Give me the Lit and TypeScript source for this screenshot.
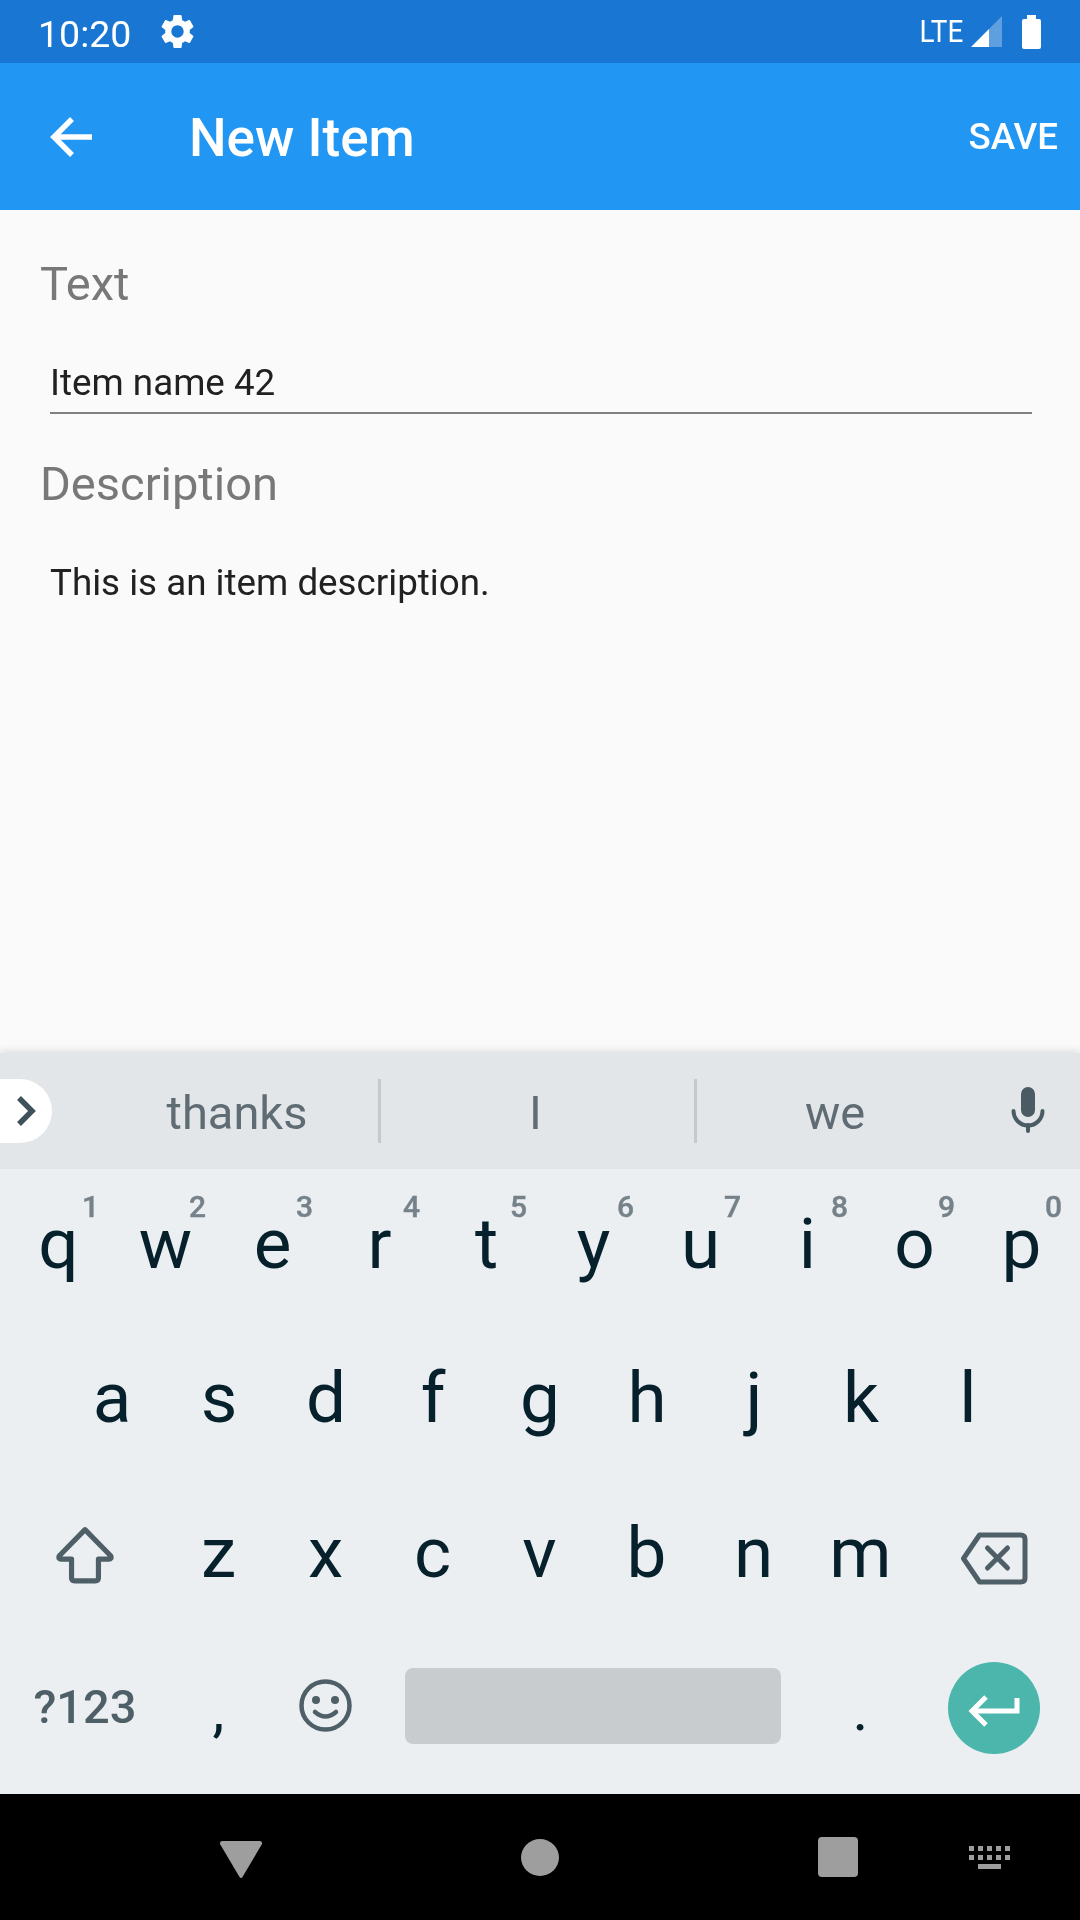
import { LitElement, html, css } from "lit";
import { customElement } from "lit/decorators.js";

const row1 = ["q", "w", "e", "r", "t", "y", "u", "i", "o", "p"];
const hints = ["1", "2", "3", "4", "5", "6", "7", "8", "9", "0"];
const row2 = ["a", "s", "d", "f", "g", "h", "j", "k", "l"];
const row3 = ["z", "x", "c", "v", "b", "n", "m"];

@customElement("app-root")
export class AppRoot extends LitElement {
  static styles = css`
    :host { display: block; width: 1080px; height: 1920px; font-family: Roboto, "Liberation Sans", sans-serif; }
    .page { display: flex; flex-direction: column; height: 1920px; background: #fafafa; overflow: hidden; }
    svg { display: block; flex: none; }
    .time, .lte, .title, .save, .form, .rows, .cell { will-change: opacity; }

    .status { flex: none; height: 63px; background: #1976d2; color: #fff; display: flex; align-items: center; padding: 0 39px 0 38px; box-sizing: border-box; }
    .time { font-size: 37.5px; line-height: 44px; padding-top: 4px; }
    .gear { margin-left: 26px; }
    .lte { margin-left: auto; font-size: 32px; font-weight: 400; line-height: 40px; transform: scaleX(0.87); transform-origin: right center; padding-bottom: 2px; }
    .signal { margin-left: 8px; }
    .battery { margin-left: 20px; }

    .toolbar { flex: none; height: 147px; background: #2196f3; color: #fff; display: flex; align-items: center; padding: 0 22px 0 50px; box-sizing: border-box; }
    .title { font-size: 53px; font-weight: 500; line-height: 62px; margin-left: 97px; padding-top: 3px; }
    .save { margin-left: auto; font-size: 36.75px; font-weight: 500; line-height: 44px; padding-top: 1px; }

    .form { flex: 1; padding-top: 47px; }
    .label { font-size: 47px; line-height: 54px; color: #787878; margin-left: 40px; }
    .value { font-size: 36.75px; line-height: 44px; color: #212121; margin-left: 50px; }
    .name { margin: 49.5px 48px 0 50px; padding-bottom: 7px; border-bottom: 2px solid #808080; }
    .desc-label { margin-top: 43px; }
    .desc { margin-top: 50.5px; }

    .keyboard { flex: none; height: 741px; background: #ebeff2; box-shadow: 0 -2px 8px rgba(0, 0, 0, 0.12); position: relative; }
    .strip { height: 116px; background: #e3e6e9; display: flex; align-items: center; }
    .pill { flex: none; width: 52px; height: 64px; background: #fff; border-radius: 0 32px 32px 0; margin-top: -1px; }
    .cell { flex: none; box-sizing: border-box; text-align: center; font-size: 47px; line-height: 56px; color: #5f6c74; padding-top: 4px; }
    .c1 { width: 326px; padding-left: 44px; }
    .c2 { width: 313px; padding-right: 4px; }
    .c3 { width: 276px; }
    .sep { flex: none; width: 3px; height: 64px; background: #c5c9cc; margin-top: -1px; }
    .mic { margin-left: 38px; margin-top: -2px; }

    .rows { padding: 0 5px; }
    .row { display: flex; height: 154.5px; }
    .indent { padding-left: 53.5px; }
    .key { position: relative; flex: none; width: 107px; display: flex; align-items: center; justify-content: center; box-sizing: border-box; font-size: 71px; color: #06202c; padding-bottom: 6px; }
    .hint { position: absolute; top: 23px; right: 13px; font-size: 30px; line-height: 29px; font-weight: 500; color: #76828a; -webkit-text-stroke: 0.4px #76828a; }
    .wide { width: 160px; }
    .spacekey { width: 428px; padding-bottom: 0; }
    .space { width: 376px; height: 76px; background: #c8cccf; border-radius: 8px; margin-top: -8px; }
    .sym { font-size: 47px; font-weight: 500; color: #4f5f67; padding-bottom: 7px; }
    .punct { font-size: 60px; padding-bottom: 0; }
    .emoji { margin-top: -8px; }
    .del { margin: 6px 0 0 -1px; }
    .enter { width: 92px; height: 92px; border-radius: 50%; background: #4db6ac; margin-top: -4px; }
    .keyslot { padding-bottom: 0; }

    .nav { flex: none; height: 126px; background: #000; display: flex; align-items: center; }
    .back { margin: 5px 0 0 219px; }
    .home { width: 38px; height: 37px; border-radius: 50%; background: #9e9e9e; margin-left: 258px; }
    .recent { width: 40px; height: 40px; border-radius: 4px; background: #9e9e9e; margin-left: 259px; }
    .kbd { margin-left: 111px; }
  `;

  private key(label: string, hint?: string) {
    return html`<div class="key">${label}${hint ? html`<span class="hint">${hint}</span>` : ""}</div>`;
  }

  render() {
    return html`
      <div class="page">
        <div class="status">
          <span class="time">10:20</span>
          <svg class="gear" width="41" height="41" viewBox="0 0 24 24" fill="#fff"><path fill-rule="evenodd" d="M19.14,12.94c0.04-0.3,0.06-0.61,0.06-0.94c0-0.32-0.02-0.64-0.07-0.94l2.03-1.58c0.18-0.14,0.23-0.41,0.12-0.61l-1.92-3.32c-0.12-0.22-0.37-0.29-0.59-0.22l-2.39,0.96c-0.5-0.38-1.03-0.7-1.62-0.94L14.4,2.81c-0.04-0.24-0.24-0.41-0.48-0.41h-3.84c-0.24,0-0.43,0.17-0.47,0.41L9.25,5.35C8.66,5.59,8.12,5.92,7.63,6.29L5.24,5.33c-0.22-0.08-0.47,0-0.59,0.22L2.74,8.87C2.62,9.08,2.66,9.34,2.86,9.48l2.03,1.58C4.84,11.36,4.8,11.69,4.8,12s0.02,0.64,0.07,0.94l-2.03,1.58c-0.18,0.14-0.23,0.41-0.12,0.61l1.92,3.32c0.12,0.22,0.37,0.29,0.59,0.22l2.39-0.96c0.5,0.38,1.03,0.7,1.62,0.94l0.36,2.54c0.05,0.24,0.24,0.41,0.48,0.41h3.84c0.24,0,0.44-0.17,0.47-0.41l0.36-2.54c0.59-0.24,1.13-0.56,1.62-0.94l2.39,0.96c0.22,0.08,0.47,0,0.59-0.22l1.92-3.32c0.12-0.22,0.07-0.47-0.12-0.61L19.14,12.94z M12,15.6c-1.98,0-3.6-1.62-3.6-3.6s1.62-3.6,3.6-3.6s3.6,1.62,3.6,3.6S13.98,15.6,12,15.6z"/></svg>
          <span class="lte">LTE</span>
          <svg class="signal" width="31" height="31" viewBox="0 0 31 31"><path d="M18 13 L31 0 V31 H18 Z" fill="#fff" opacity="0.3"/><path d="M0 31 L18 13 V31 Z" fill="#fff"/></svg>
          <svg class="battery" width="19" height="34" viewBox="0 0 19 34"><path d="M5 0 H14 V4 H17 Q19 4 19 6 V32 Q19 34 17 34 H2 Q0 34 0 32 V6 Q0 4 2 4 H5 Z" fill="#fff"/></svg>
        </div>

        <div class="toolbar">
          <svg width="42" height="42" viewBox="0 0 42 42" fill="none" stroke="#fff" stroke-width="5.5"><path d="M42 21 H5"/><path d="M22 3 L4 21 L22 39"/></svg>
          <span class="title">New Item</span>
          <span class="save">SAVE</span>
        </div>

        <div class="form">
          <div class="label">Text</div>
          <div class="value name">Item name 42</div>
          <div class="label desc-label">Description</div>
          <div class="value desc">This is an item description.</div>
        </div>

        <div class="keyboard">
          <div class="strip">
            <div class="pill">
              <svg width="52" height="64" viewBox="0 0 52 64" fill="none" stroke="#3f525c" stroke-width="5.5"><path d="M19 19 L32 32 L19 45"/></svg>
            </div>
            <div class="cell c1">thanks</div>
            <div class="sep"></div>
            <div class="cell c2">I</div>
            <div class="sep"></div>
            <div class="cell c3">we</div>
            <svg class="mic" width="34" height="46" viewBox="0 0 34 46" fill="none" stroke="#4a5b64" stroke-width="4" stroke-linecap="round"><rect x="10" y="0" width="14" height="30" rx="7" fill="#4a5b64" stroke="none"/><path d="M2.5 24 A14.5 14.5 0 0 0 31.5 24"/><path d="M17 38 V44"/></svg>
          </div>

          <div class="rows">
            <div class="row">${row1.map((k, i) => this.key(k, hints[i]))}</div>
            <div class="row indent">${row2.map((k) => this.key(k))}</div>
            <div class="row">
              <div class="key wide keyslot">
                <svg width="60" height="58" viewBox="0 0 58 56" fill="none" stroke="#4f5f67" stroke-width="5" stroke-linejoin="round"><path d="M29 3.5 L4 29 Q3 32 6 32 H16 V50 Q16 53 19 53 H39 Q42 53 42 50 V32 H52 Q55 32 54 29 Z"/></svg>
              </div>
              ${row3.map((k) => this.key(k))}
              <div class="key wide keyslot">
                <svg class="del" width="68" height="53" viewBox="0 0 67 53" fill="none" stroke="#4f5f67" stroke-width="5" stroke-linejoin="round" stroke-linecap="round"><path d="M3 26.5 L19 3 H60 Q64.5 3 64.5 7 V46 Q64.5 50 60 50 H19 Z"/><path d="M27 16 L47 36 M47 16 L27 36"/></svg>
              </div>
            </div>
            <div class="row">
              <div class="key wide sym">?123</div>
              <div class="key punct">,</div>
              <div class="key keyslot">
                <svg class="emoji" width="53" height="53" viewBox="0 0 53 53" fill="none" stroke="#4f5f67" stroke-width="4.5" stroke-linecap="round"><circle cx="26.5" cy="26.5" r="24"/><circle cx="17" cy="21" r="4" fill="#4f5f67" stroke="none"/><circle cx="36" cy="21" r="4" fill="#4f5f67" stroke="none"/><path d="M16 33 Q26.5 42 37 33"/></svg>
              </div>
              <div class="key spacekey"><div class="space"></div></div>
              <div class="key punct">.</div>
              <div class="key wide keyslot">
                <div class="enter">
                  <svg width="92" height="92" viewBox="0 0 92 92" fill="none" stroke="#fff" stroke-width="5"><path d="M69 36 V49 H25"/><path d="M38 35 L24 49 L38 63"/></svg>
                </div>
              </div>
            </div>
          </div>
        </div>

        <div class="nav">
          <svg class="back" width="44" height="37" viewBox="0 0 43 37" fill="#9e9e9e"><path d="M3 0 H40 Q43 0 42.5 3 L23 36 Q21.5 38 20 36 L0.5 3 Q0 0 3 0 Z"/></svg>
          <div class="home"></div>
          <div class="recent"></div>
          <svg class="kbd" width="41" height="23" viewBox="0 0 41 23" fill="#9e9e9e">
            <path d="M0 0h5v5h-5z M9 0h5v5h-5z M18 0h5v5h-5z M27 0h5v5h-5z M36 0h5v5h-5z M0 9h5v5h-5z M9 9h5v5h-5z M18 9h5v5h-5z M27 9h5v5h-5z M36 9h5v5h-5z M9 18h23v5h-23z"/>
          </svg>
        </div>
      </div>
    `;
  }
}
